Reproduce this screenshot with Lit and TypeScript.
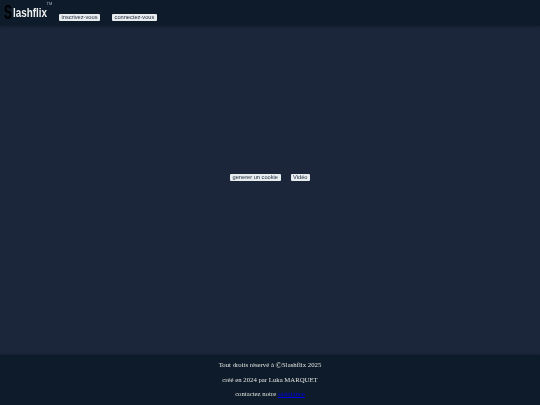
import { LitElement, html, css } from "lit";
import { customElement } from "lit/decorators.js";

@customElement("app-root")
export class AppRoot extends LitElement {
  static styles = css`
    :host { display: flex; flex-direction: column; width: 540px; height: 405px; background: #1b263b; overflow: hidden; }
    header { height: 26px; box-sizing: border-box; flex: none; background: #0d1b2a; box-shadow: 0 0 3px rgba(0,0,0,.35); display: flex; align-items: flex-start; position: relative; }
    .logo { display: flex; width: 54px; height: 26px; padding-left: 4px; box-sizing: border-box; font-family: "Liberation Sans", sans-serif; font-weight: 700; color: #eef0f0; filter: blur(.25px); }
    .s { display: block; margin-right: -4.7px; font-size: 20.5px; line-height: 24px; height: 24px; color: #000; transform: scaleX(.58); transform-origin: left; }
    .name { display: block; font-size: 13px; line-height: 15px; margin-top: 4.5px; transform: scaleX(.76); transform-origin: left; white-space: nowrap; }
    .tm { position: absolute; left: 46.5px; top: 1px; font: 4px/5px "Liberation Sans", sans-serif; color: #aab2bc; filter: blur(.25px); }
    .btn { display: inline-block; background: #e8edef; color: #1b263b; border-radius: 1px; font: 5.7px/7px "Liberation Sans", sans-serif; height: 7px; padding: 0 2.5px; box-sizing: border-box; white-space: nowrap; filter: blur(.25px); }
    .nav { display: flex; gap: 12px; margin-top: 14px; margin-left: 5px; }
    main { flex: 1; display: flex; justify-content: center; align-items: center; gap: 10px; padding-bottom: 26px; }
    footer { height: 50px; flex: none; box-sizing: border-box; background: #0d1b2a; box-shadow: 0 0 3px rgba(0,0,0,.35); color: #e0e1dd; font: 6.75px/14.5px "Liberation Serif", serif; text-align: center; padding-top: 3px; }
    footer p { filter: blur(.2px); }
    .c { font-size: 8.5px; line-height: 1px; vertical-align: -0.5px; }
    a { color: #0000ee; text-decoration: underline; }
    p { margin: 0; }
  `;
  render() {
    return html`
      <header>
        <div class="logo"><span class="s">S</span><span class="name">lashflix</span></div>
        <span class="tm">TM</span>
        <div class="nav"><span class="btn">inscrivez-vous</span><span class="btn">connectez-vous</span></div>
      </header>
      <main><span class="btn">generer un cookie</span><span class="btn">Vidéo</span></main>
      <footer>
        <p>Tout droits réservé à <span class="c">©</span>Slashflix 2025</p>
        <p>créé en 2024 par Luka MARQUET</p>
        <p>contactez notre <a href="#">assistance</a></p>
      </footer>
    `;
  }
}
